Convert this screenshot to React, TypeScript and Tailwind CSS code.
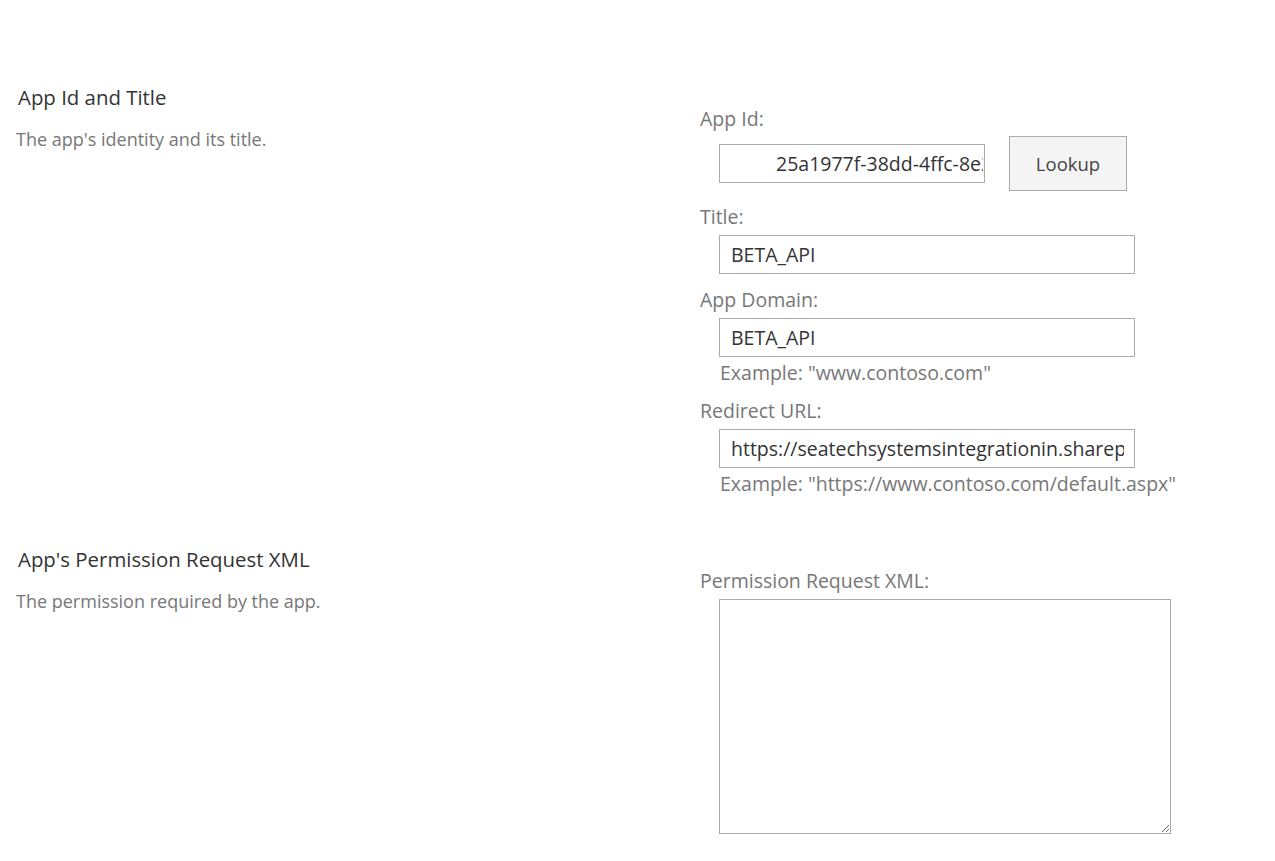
import React from "react";

const font = { fontFamily: '"Open Sans", "Noto Sans", sans-serif' };

function Field({
  label,
  children,
  example,
}: {
  label: string;
  children: React.ReactNode;
  example?: string;
}) {
  return (
    <div className="flex flex-col">
      <label className="text-[19.5px] leading-[24px] text-[#777]">{label}</label>
      <div className="mt-[6px] pl-[19px]">{children}</div>
      {example && (
        <div className="mt-[4px] pl-[20px] text-[19.5px] leading-[24px] text-[#777]">
          {example}
        </div>
      )}
    </div>
  );
}

const inputCls =
  "h-[39px] border border-[#ababab] bg-white text-[19.5px] text-[#333] outline-none";

function Section({
  title,
  desc,
  children,
}: {
  title: string;
  desc: string;
  children: React.ReactNode;
}) {
  return (
    <section className="flex">
      <div className="w-[700px] shrink-0 pl-[18px]">
        <h2 className="text-[20.4px] leading-[26px] text-[#333]">{title}</h2>
        <p className="-ml-[2px] mt-[18px] text-[18px] leading-[22px] text-[#777]">
          {desc}
        </p>
      </div>
      <div className="flex flex-col pt-[23px]">{children}</div>
    </section>
  );
}

export default function App() {
  return (
    <main className="min-h-screen bg-white pt-[84px]" style={font}>
      <Section title="App Id and Title" desc="The app's identity and its title.">
        <div className="flex flex-col gap-[14px]">
          <div className="flex flex-col">
            <label className="text-[19.5px] leading-[24px] text-[#777]">App Id:</label>
            <div className="mt-[5px] flex items-center pl-[19px]">
              <input
                readOnly
                value="25a1977f-38dd-4ffc-8e2d-7d0f3c4a9b61"
                className={`${inputCls} w-[266px] pl-[56px] pr-[1px]`}
              />
              <button className="ml-[24px] h-[55px] w-[118px] border border-[#ababab] bg-[#f4f4f4] text-[18.5px] text-[#444]">
                Lookup
              </button>
            </div>
          </div>
          <Field label="Title:">
            <input readOnly value="BETA_API" className={`${inputCls} w-[416px] px-[11px]`} />
          </Field>
          <Field label="App Domain:" example={'Example: "www.contoso.com"'}>
            <input readOnly value="BETA_API" className={`${inputCls} w-[416px] px-[11px]`} />
          </Field>
          <Field
            label="Redirect URL:"
            example={'Example: "https://www.contoso.com/default.aspx"'}
          >
            <input
              readOnly
              value="https://seatechsystemsintegrationin.sharepoint.com/sites/beta"
              className={`${inputCls} w-[416px] pl-[11px] pr-[10px]`}
            />
          </Field>
        </div>
      </Section>

      <div className="mt-[50px]">
        <Section
          title="App's Permission Request XML"
          desc="The permission required by the app."
        >
          <Field label="Permission Request XML:">
            <textarea className="block h-[235px] w-[452px] border border-[#ababab] bg-white p-2 text-[18px] text-[#333] outline-none" />
          </Field>
        </Section>
      </div>
    </main>
  );
}
